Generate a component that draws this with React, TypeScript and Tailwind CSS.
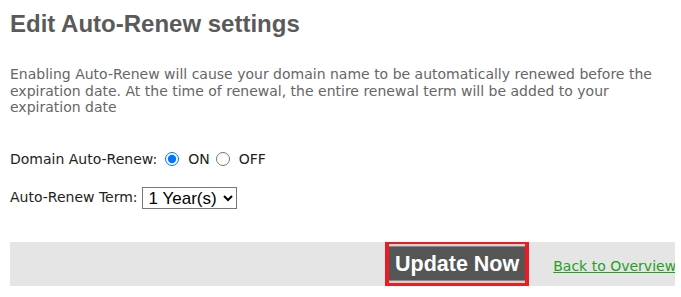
import React from 'react'

const AutoRenewSettings: React.FC = () => {
    return (
        <div className="bg-white min-h-screen pl-[10px] pr-[6px] pt-[10px] font-['DejaVu_Sans',Verdana,sans-serif]">
            {/* Heading */}
            <h1 className="font-['Liberation_Sans',Arial,sans-serif] font-bold text-[24px] leading-[28px] text-[#5a5a5a]">
                Edit Auto-Renew settings
            </h1>

            {/* Description */}
            <p className="mt-[28px] text-[14px] leading-[16.5px] text-[#666]">
                Enabling Auto-Renew will cause your domain name to be automatically renewed before the expiration date. At the time of renewal, the entire renewal term will be added to your expiration date
            </p>

            {/* Auto-Renew toggle */}
            <div className="mt-[33px] flex items-center text-[14px] text-[#222]">
                <span>Domain Auto-Renew:</span>
                <label className="flex items-center ml-[8px]">
                    <input type="radio" name="autorenew" defaultChecked className="w-[14px] h-[14px] m-0 accent-[#0075ff]" />
                    <span className="ml-[9px]">ON</span>
                </label>
                <label className="flex items-center ml-[6px]">
                    <input type="radio" name="autorenew" className="w-[14px] h-[14px] m-0" />
                    <span className="ml-[9px]">OFF</span>
                </label>
            </div>

            {/* Term select */}
            <div className="mt-[17px] flex items-center text-[14px] text-[#222]">
                <span>Auto-Renew Term:</span>
                <select
                    defaultValue="1"
                    className="ml-[4px] h-[22px] w-[95px] border border-[#767676] bg-white text-black text-[17px] font-['Liberation_Sans',Arial,sans-serif] pl-[2px]"
                >
                    <option value="1">1 Year(s)</option>
                    <option value="2">2 Year(s)</option>
                    <option value="3">3 Year(s)</option>
                </select>
            </div>

            {/* Action bar */}
            <div className="mt-[33px] h-[44px] bg-[#e5e5e5] flex items-center overflow-hidden">
                <div className="ml-[375px] shrink-0 border-[4px] border-[#ed1c24] -my-[2px]">
                    <button className="block h-[39px] px-[6px] bg-[#555] border-y-[2px] border-[#d4d4d4] shadow-[inset_0_1px_0_#8a8a8a,inset_0_-1px_0_#8a8a8a] text-white font-['Liberation_Sans',Arial,sans-serif] font-bold text-[21.5px] leading-[24px]">
                        Update Now
                    </button>
                </div>
                <a href="#" className="ml-[24px] mt-[6px] shrink-0 whitespace-nowrap text-[14px] text-[#22a022] underline">
                    Back to Overview
                </a>
            </div>
        </div>
    )
}

export default function App() {
    return <AutoRenewSettings />
}
